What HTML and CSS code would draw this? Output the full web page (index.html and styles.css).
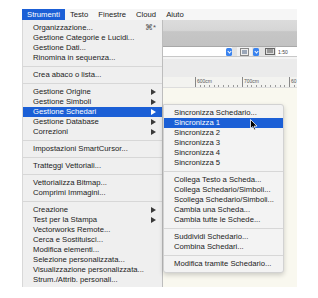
FILE: index.html
```html
<!DOCTYPE html>
<html lang="it">

<head>
  <meta charset="UTF-8">
  <meta name="viewport" content="width=device-width, initial-scale=1.0">
  <title>Strumenti</title>

  <link rel="stylesheet" href="styles.css">
</head>

<body>
  <div class="screen">
    <div class="menubar">
      <span class="mb-item active">Strumenti</span>
      <span class="mb-item">Testo</span>
      <span class="mb-item">Finestre</span>
      <span class="mb-item">Cloud</span>
      <span class="mb-item">Aiuto</span>
    </div>

    <div class="app">
      <div class="toolbar"></div>
      <div class="fieldbar">
        <div class="field wide"><span class="drop"></span></div>
        <div class="iconbox">
          <svg width="9" height="8" viewBox="0 0 9 8">
            <rect x="0.5" y="0.5" width="8" height="7" fill="#eee" stroke="#888" />
            <rect x="2" y="2" width="5" height="4" fill="#9aa6b8" />
          </svg>
        </div>
        <span class="drop"></span>
        <div class="scale-ico">
          <svg width="10" height="7" viewBox="0 0 10 7">
            <rect x="0.5" y="0.5" width="9" height="6" fill="#ddd" stroke="#666" />
            <path d="M2 2h6M2 4h6" stroke="#555" />
          </svg>
        </div>
        <div class="field scale">1:50</div>
      </div>
      <div class="panel"></div>
      <div class="ruler">
        <span class="seg">600cm</span>
        <span class="seg">700cm</span>
        <span class="seg">60</span>
      </div>
      <div class="canvas"></div>
    </div>

    <div class="menu main-menu">
      <div class="item">Organizzazione...<span class="key">⌘*</span></div>
      <div class="item">Gestione Categorie e Lucidi...</div>
      <div class="item">Gestione Dati...</div>
      <div class="item">Rinomina in sequenza...</div>
      <div class="sep"></div>
      <div class="item">Crea abaco o lista...</div>
      <div class="sep"></div>
      <div class="item sub">Gestione Origine</div>
      <div class="item sub">Gestione Simboli</div>
      <div class="item sub hl">Gestione Schedari</div>
      <div class="item sub">Gestione Database</div>
      <div class="item sub">Correzioni</div>
      <div class="sep"></div>
      <div class="item">Impostazioni SmartCursor...</div>
      <div class="sep"></div>
      <div class="item">Tratteggi Vettoriali...</div>
      <div class="sep"></div>
      <div class="item">Vettorializza Bitmap...</div>
      <div class="item">Comprimi Immagini...</div>
      <div class="sep"></div>
      <div class="item sub">Creazione</div>
      <div class="item sub">Test per la Stampa</div>
      <div class="item">Vectorworks Remote...</div>
      <div class="item">Cerca e Sostituisci...</div>
      <div class="item">Modifica elementi...</div>
      <div class="item">Selezione personalizzata...</div>
      <div class="item">Visualizzazione personalizzata...</div>
      <div class="item">Strum./Attrib. personali...</div>
      <div class="item">Impostazioni personalizzate...</div>
    </div>

    <div class="menu sub-menu">
      <div class="item">Sincronizza Schedario...</div>
      <div class="item hl">Sincronizza 1</div>
      <div class="item">Sincronizza 2</div>
      <div class="item">Sincronizza 3</div>
      <div class="item">Sincronizza 4</div>
      <div class="item">Sincronizza 5</div>
      <div class="sep"></div>
      <div class="item">Collega Testo a Scheda...</div>
      <div class="item">Collega Schedario/Simboli...</div>
      <div class="item">Scollega Schedario/Simboli...</div>
      <div class="item">Cambia una Scheda...</div>
      <div class="item">Cambia tutte le Schede...</div>
      <div class="sep"></div>
      <div class="item">Suddividi Schedario...</div>
      <div class="item">Combina Schedari...</div>
      <div class="sep"></div>
      <div class="item">Modifica tramite Schedario...</div>
    </div>

    <svg class="cursor" width="8" height="12" viewBox="0 0 8 12">
      <path d="M0.5 0.5 L0.5 9.5 L2.7 7.6 L4.2 11 L5.6 10.4 L4.1 7.1 L7 7.1 Z" fill="#000" stroke="#fff" stroke-width="0.8" />
    </svg>
  </div>
</body>

</html>
```

FILE: styles.css
```css
* {
  margin: 0;
  padding: 0;
  box-sizing: border-box;
}

body {
  background: #fff;
  font-family: "Liberation Sans", Arial, sans-serif;
  font-size: 7.7px;
  color: #222;
}

.screen {
  position: relative;
  width: 275px;
  height: 278px;
  margin: 9px 0 0 22px;
  overflow: hidden;
  display: flex;
  flex-direction: column;
}

.menubar {
  display: flex;
  height: 11px;
  background: #f6f6f6;
}

.mb-item {
  padding: 0 5px;
  line-height: 11px;
}

.mb-item.active {
  background: #1b5fd6;
  color: #fff;
}

.app {
  flex: 1;
  display: flex;
  flex-direction: column;
}

.toolbar {
  height: 27px;
  background: linear-gradient(#dcdcdc 0, #d6d6d6 40%, #c6c6c6 45%, #c2c2c2 100%);
  border-bottom: 1px solid #a8a8a8;
}

.fieldbar {
  display: flex;
  align-items: center;
  height: 10px;
  background: #e4e4e4;
  border-bottom: 1px solid #c8c8c8;
}

.field {
  height: 9px;
  background: #fff;
  display: flex;
  align-items: center;
  justify-content: flex-end;
}

.field.wide {
  flex: 1;
}

.drop {
  width: 6px;
  height: 8px;
  border-radius: 1.5px;
  background: #3a83ef;
  position: relative;
}

.drop::after {
  content: "";
  position: absolute;
  left: 1.5px;
  top: 2px;
  width: 2px;
  height: 2px;
  border-right: 1px solid #fff;
  border-bottom: 1px solid #fff;
  transform: rotate(45deg);
}

.iconbox {
  width: 15px;
  height: 9px;
  margin-left: 5px;
  margin-right: 1px;
  background: #f2f2f2;
  display: flex;
  align-items: center;
  justify-content: center;
}

.scale-ico {
  width: 10px;
  margin-left: 6px;
  display: flex;
}

.field.scale {
  width: 21px;
  margin-left: 1px;
  justify-content: flex-start;
  padding-left: 2px;
  font-size: 5px;
  color: #444;
}

.panel {
  height: 20px;
  background: #ebebeb;
  border-top: 2px solid #f4f4f4;
}

.ruler {
  height: 11px;
  display: flex;
  padding-left: 173px;
  background:
    repeating-linear-gradient(90deg, #999 0 1px, transparent 1px 4.7px) 173px 100% / 100% 2px no-repeat,
    #f3f3f0;
  border-bottom: 1px solid #ddd;
}

.seg {
  flex: 0 0 47px;
  border-left: 1px solid #888;
  padding-left: 1px;
  font-size: 5px;
  line-height: 8px;
  color: #555;
}

.canvas {
  flex: 1;
  background: #f9f8ef;
}

.menu {
  position: absolute;
  background: #efefef;
}

.main-menu {
  left: 0;
  top: 11px;
  width: 141px;
  padding-top: 3px;
  border-right: 1px solid #bdbdbd;
  border-left: 1px solid #d8d8d8;
}

.sub-menu {
  left: 141px;
  top: 94.7px;
  width: 121px;
  padding: 3px 0;
  background: #f3f3f3;
  border: 1px solid #d2d2d2;
  border-radius: 0 3px 3px 3px;
  box-shadow: 0 2px 5px rgba(0, 0, 0, 0.18);
}

.item {
  position: relative;
  height: 10px;
  line-height: 10px;
  padding-left: 10px;
  white-space: nowrap;
}

.item.hl {
  background: #1b5fd6;
  color: #fff;
}

.item.sub::after {
  content: "";
  position: absolute;
  right: 6px;
  top: 2px;
  border-left: 5px solid #3a3a3a;
  border-top: 3px solid transparent;
  border-bottom: 3px solid transparent;
}

.item.sub.hl::after {
  border-left-color: #fff;
}

.key {
  position: absolute;
  right: 6px;
  top: 0;
  color: #555;
}

.sep {
  height: 7px;
  display: flex;
  align-items: center;
}

.sep::before {
  content: "";
  flex: 1;
  height: 1px;
  background: #d7d7d7;
}

.cursor {
  position: absolute;
  left: 228px;
  top: 110px;
}
```
